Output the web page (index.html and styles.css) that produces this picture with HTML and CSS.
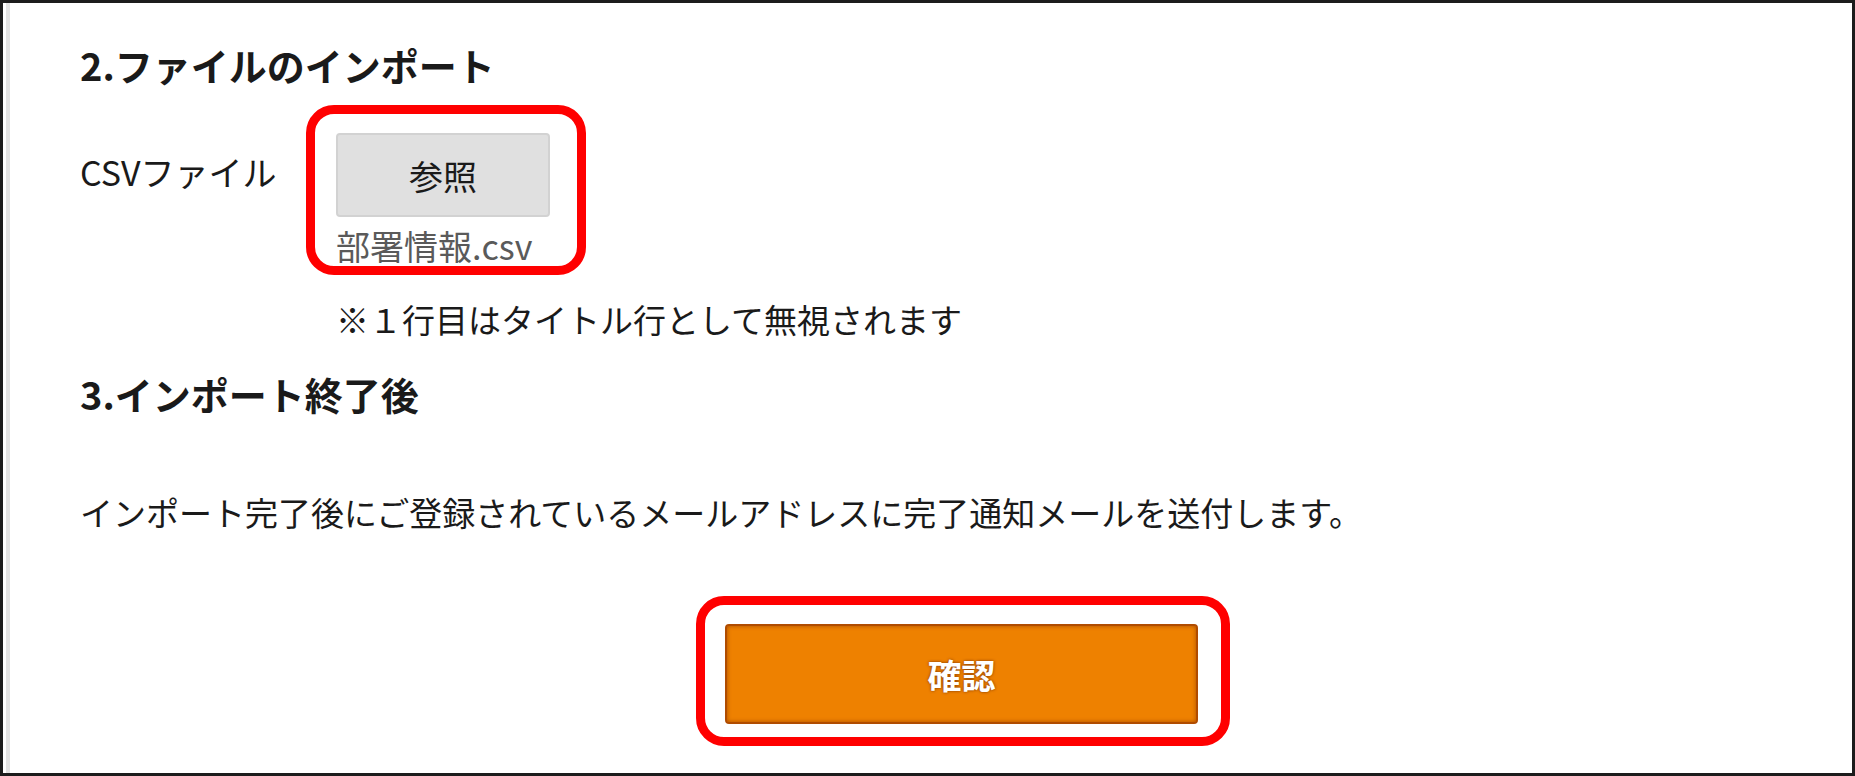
FILE: index.html
```html
<!DOCTYPE html>
<html lang="ja">
<head>
    <meta charset="UTF-8">
    <meta name="viewport" content="width=device-width, initial-scale=1.0">
    <title>CSVインポート</title>
    <link rel="stylesheet" href="styles.css">
</head>
<body>
    <div class="frame">
        <div class="panel">
            <h2 class="step-title">2.ファイルのインポート</h2>

            <div class="field-row">
                <div class="field-label">CSVファイル</div>
                <div class="highlight file-box">
                    <button class="browse-btn">参照</button>
                    <div class="file-name">部署情報.csv</div>
                </div>
            </div>

            <p class="note">※１行目はタイトル行として無視されます</p>

            <h2 class="step-title step-next">3.インポート終了後</h2>

            <p class="desc">インポート完了後にご登録されているメールアドレスに完了通知メールを送付します。</p>

            <div class="highlight confirm-box">
                <button class="confirm-btn">確認</button>
            </div>
        </div>
    </div>
</body>
</html>
```

FILE: styles.css
```css
body {
    margin: 0;
    background-color: #fff;
    font-family: "Noto Sans CJK JP", "Noto Sans", sans-serif;
    font-size: 33px;
    line-height: 40px;
    color: #1a1a1a;
}
.frame {
    height: 776px;
    box-sizing: border-box;
    border: 3px solid #1c1c1c;
}
.panel {
    height: 100%;
    box-sizing: border-box;
    margin-left: 3px;
    border-left: 4px solid #e3e3e3;
    padding: 42px 0 0 70px;
}
.step-title {
    margin: 0;
    font-size: 38px;
    line-height: 40px;
    font-weight: bold;
    color: #1a1a1a;
}
.step-next {
    margin-top: 35px;
}
.field-row {
    display: flex;
    align-items: flex-start;
    margin-top: 20px;
}
.field-label {
    width: 226px;
    margin-top: 47px;
    font-size: 34px;
}
.highlight {
    width: fit-content;
    border: 9px solid #ff0000;
    border-radius: 28px;
}
.file-box {
    padding: 19px 27px 0 21px;
}
.browse-btn {
    display: block;
    width: 214px;
    height: 84px;
    padding: 0;
    background-color: #e0e0e0;
    border: 2px solid #d2d2d2;
    border-radius: 4px;
    font-family: inherit;
    font-size: 34px;
    color: #1a1a1a;
}
.file-name {
    margin-top: 9px;
    font-size: 34px;
    color: #5a5a5a;
}
.note {
    margin: 24px 0 0 256px;
}
.desc {
    margin: 78px 0 0 0;
}
.confirm-box {
    margin: 64px 0 0 616px;
    padding: 19px 23px 13px 20px;
}
.confirm-btn {
    display: block;
    width: 473px;
    height: 100px;
    padding: 0;
    background-color: #ee8100;
    border: 2px solid #b04c00;
    border-radius: 4px;
    box-shadow: inset 0 0 4px rgba(120, 40, 0, 0.55);
    font-family: inherit;
    font-size: 34px;
    font-weight: bold;
    color: #fff;
    text-shadow: 0 0 3px #7a3000;
}
```
